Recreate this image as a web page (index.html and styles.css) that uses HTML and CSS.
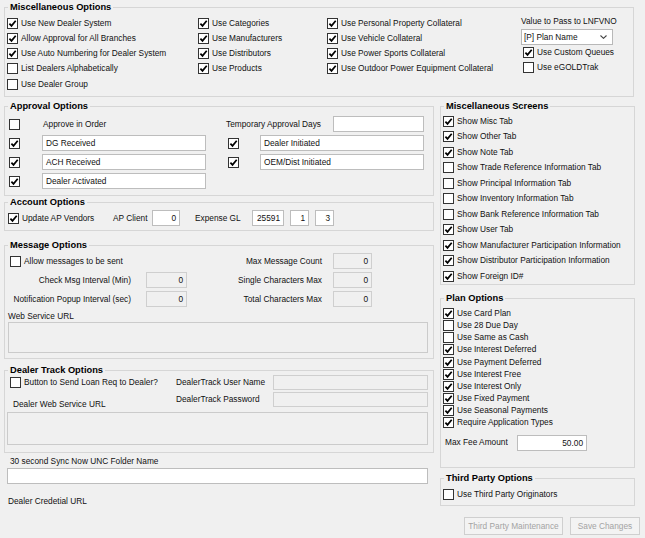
FILE: index.html
```html
<!DOCTYPE html>
<html>
<head>
<meta charset="utf-8">
<title>Dealer Settings</title>
<link rel="stylesheet" href="styles.css">
</head>
<body>
<div class="page">

  <div class="group g-misc">
    <div class="gtitle">Miscellaneous Options</div>
    <div class="misc-grid">
      <div class="mcol">
        <div class="cb"><span class="box"><svg viewBox="0 0 9 9"><path d="M1.4 4.6 3.5 6.9 7.7 1.7"/></svg></span><span>Use New Dealer System</span></div>
        <div class="cb"><span class="box"><svg viewBox="0 0 9 9"><path d="M1.4 4.6 3.5 6.9 7.7 1.7"/></svg></span><span>Allow Approval for All Branches</span></div>
        <div class="cb"><span class="box"><svg viewBox="0 0 9 9"><path d="M1.4 4.6 3.5 6.9 7.7 1.7"/></svg></span><span>Use Auto Numbering for Dealer System</span></div>
        <div class="cb"><span class="box"></span><span>List Dealers Alphabetically</span></div>
        <div class="cb"><span class="box"></span><span>Use Dealer Group</span></div>
      </div>
      <div class="mcol">
        <div class="cb"><span class="box"><svg viewBox="0 0 9 9"><path d="M1.4 4.6 3.5 6.9 7.7 1.7"/></svg></span><span>Use Categories</span></div>
        <div class="cb"><span class="box"><svg viewBox="0 0 9 9"><path d="M1.4 4.6 3.5 6.9 7.7 1.7"/></svg></span><span>Use Manufacturers</span></div>
        <div class="cb"><span class="box"><svg viewBox="0 0 9 9"><path d="M1.4 4.6 3.5 6.9 7.7 1.7"/></svg></span><span>Use Distributors</span></div>
        <div class="cb"><span class="box"><svg viewBox="0 0 9 9"><path d="M1.4 4.6 3.5 6.9 7.7 1.7"/></svg></span><span>Use Products</span></div>
      </div>
      <div class="mcol">
        <div class="cb"><span class="box"><svg viewBox="0 0 9 9"><path d="M1.4 4.6 3.5 6.9 7.7 1.7"/></svg></span><span>Use Personal Property Collateral</span></div>
        <div class="cb"><span class="box"><svg viewBox="0 0 9 9"><path d="M1.4 4.6 3.5 6.9 7.7 1.7"/></svg></span><span>Use Vehicle Collateral</span></div>
        <div class="cb"><span class="box"><svg viewBox="0 0 9 9"><path d="M1.4 4.6 3.5 6.9 7.7 1.7"/></svg></span><span>Use Power Sports Collateral</span></div>
        <div class="cb"><span class="box"><svg viewBox="0 0 9 9"><path d="M1.4 4.6 3.5 6.9 7.7 1.7"/></svg></span><span>Use Outdoor Power Equipment Collateral</span></div>
      </div>
      <div class="mcol mcol4">
        <div class="lbl">Value to Pass to LNFVNO</div>
        <div class="select"><span>[P] Plan Name</span><svg class="chev" viewBox="0 0 7 4"><path d="M0.5 0.5 3.5 3.3 6.5 0.5"/></svg></div>
        <div class="cb cb15"><span class="box"><svg viewBox="0 0 9 9"><path d="M1.4 4.6 3.5 6.9 7.7 1.7"/></svg></span><span>Use Custom Queues</span></div>
        <div class="cb cb15"><span class="box"></span><span>Use eGOLDTrak</span></div>
      </div>
    </div>
  </div>

  <div class="columns">
    <div class="left">

      <div class="group g-appr">
        <div class="gtitle">Approval Options</div>
        <div class="appr-grid">
          <span class="box"></span>
          <div class="lbl pad1">Approve in Order</div>
          <div></div>
          <div class="appr-right"><span class="lbl">Temporary Approval Days</span><div class="tb w91"></div></div>

          <span class="box"><svg viewBox="0 0 9 9"><path d="M1.4 4.6 3.5 6.9 7.7 1.7"/></svg></span>
          <div class="tb">DG Received</div>
          <div></div>
          <div class="appr-right"><span class="box ml2"><svg viewBox="0 0 9 9"><path d="M1.4 4.6 3.5 6.9 7.7 1.7"/></svg></span><div class="tb w164">Dealer Initiated</div></div>

          <span class="box"><svg viewBox="0 0 9 9"><path d="M1.4 4.6 3.5 6.9 7.7 1.7"/></svg></span>
          <div class="tb">ACH Received</div>
          <div></div>
          <div class="appr-right"><span class="box ml2"><svg viewBox="0 0 9 9"><path d="M1.4 4.6 3.5 6.9 7.7 1.7"/></svg></span><div class="tb w164">OEM/Dist Initiated</div></div>

          <span class="box"><svg viewBox="0 0 9 9"><path d="M1.4 4.6 3.5 6.9 7.7 1.7"/></svg></span>
          <div class="tb">Dealer Activated</div>
        </div>
      </div>

      <div class="group g-acct">
        <div class="gtitle">Account Options</div>
        <div class="acct-row">
          <div class="cb w105"><span class="box"><svg viewBox="0 0 9 9"><path d="M1.4 4.6 3.5 6.9 7.7 1.7"/></svg></span><span>Update AP Vendors</span></div>
          <span class="lbl w39">AP Client</span>
          <div class="tb num w28">0</div>
          <span class="lbl w57 ml15">Expense GL</span>
          <div class="tb num w32">25591</div>
          <div class="tb num w19 ml6">1</div>
          <div class="tb num w19 ml6">3</div>
        </div>
      </div>

      <div class="group g-msg">
        <div class="gtitle">Message Options</div>
        <div class="gbody">
          <div class="msg-grid">
            <div class="cb c13 ml2"><span class="box"></span><span>Allow messages to be sent</span></div>
            <span class="lbl rl c4">Max Message Count</span>
            <div class="tb ro num c6">0</div>

            <span class="lbl rl c1">Check Msg Interval (Min)</span>
            <div class="tb ro num c3">0</div>
            <span class="lbl rl c4">Single Characters Max</span>
            <div class="tb ro num c6">0</div>

            <span class="lbl rl c1">Notification Popup Interval (sec)</span>
            <div class="tb ro num c3">0</div>
            <span class="lbl rl c4">Total Characters Max</span>
            <div class="tb ro num c6">0</div>
          </div>
          <div class="lbl wlabel">Web Service URL</div>
          <div class="area msg-area"></div>
        </div>
      </div>

      <div class="group g-dealer">
        <div class="gtitle">Dealer Track Options</div>
        <div class="gbody">
          <div class="dt-grid">
            <div class="cb ml2"><span class="box"></span><span>Button to Send Loan Req to Dealer?</span></div>
            <span class="lbl">DealerTrack User Name</span>
            <div class="tb ro"></div>
            <span class="lbl dws">Dealer Web Service URL</span>
            <span class="lbl">DealerTrack Password</span>
            <div class="tb ro"></div>
          </div>
          <div class="area dt-area"></div>
        </div>
      </div>

      <div class="loose">
        <div class="lbl sync-label">30 second Sync Now UNC Folder Name</div>
        <div class="tb sync-box"></div>
        <div class="lbl cred-label">Dealer Credetial URL</div>
      </div>
    </div>

    <div class="right">
      <div class="group g-screens">
        <div class="gtitle">Miscellaneous Screens</div>
        <div class="rlist">
          <div class="cb r155"><span class="box"><svg viewBox="0 0 9 9"><path d="M1.4 4.6 3.5 6.9 7.7 1.7"/></svg></span><span>Show Misc Tab</span></div>
          <div class="cb r155"><span class="box"><svg viewBox="0 0 9 9"><path d="M1.4 4.6 3.5 6.9 7.7 1.7"/></svg></span><span>Show Other Tab</span></div>
          <div class="cb r155"><span class="box"><svg viewBox="0 0 9 9"><path d="M1.4 4.6 3.5 6.9 7.7 1.7"/></svg></span><span>Show Note Tab</span></div>
          <div class="cb r155"><span class="box"></span><span>Show Trade Reference Information Tab</span></div>
          <div class="cb r155"><span class="box"></span><span>Show Principal Information Tab</span></div>
          <div class="cb r155"><span class="box"></span><span>Show Inventory Information Tab</span></div>
          <div class="cb r155"><span class="box"></span><span>Show Bank Reference Information Tab</span></div>
          <div class="cb r155"><span class="box"><svg viewBox="0 0 9 9"><path d="M1.4 4.6 3.5 6.9 7.7 1.7"/></svg></span><span>Show User Tab</span></div>
          <div class="cb r155"><span class="box"><svg viewBox="0 0 9 9"><path d="M1.4 4.6 3.5 6.9 7.7 1.7"/></svg></span><span>Show Manufacturer Participation Information</span></div>
          <div class="cb r155"><span class="box"><svg viewBox="0 0 9 9"><path d="M1.4 4.6 3.5 6.9 7.7 1.7"/></svg></span><span>Show Distributor Participation Information</span></div>
          <div class="cb r155"><span class="box"><svg viewBox="0 0 9 9"><path d="M1.4 4.6 3.5 6.9 7.7 1.7"/></svg></span><span>Show Foreign ID#</span></div>
        </div>
      </div>

      <div class="group g-plan">
        <div class="gtitle">Plan Options</div>
        <div class="plist">
          <div class="cb r122"><span class="box"><svg viewBox="0 0 9 9"><path d="M1.4 4.6 3.5 6.9 7.7 1.7"/></svg></span><span>Use Card Plan</span></div>
          <div class="cb r122"><span class="box"></span><span>Use 28 Due Day</span></div>
          <div class="cb r122"><span class="box"></span><span>Use Same as Cash</span></div>
          <div class="cb r122"><span class="box"><svg viewBox="0 0 9 9"><path d="M1.4 4.6 3.5 6.9 7.7 1.7"/></svg></span><span>Use Interest Deferred</span></div>
          <div class="cb r122"><span class="box"><svg viewBox="0 0 9 9"><path d="M1.4 4.6 3.5 6.9 7.7 1.7"/></svg></span><span>Use Payment Deferred</span></div>
          <div class="cb r122"><span class="box"><svg viewBox="0 0 9 9"><path d="M1.4 4.6 3.5 6.9 7.7 1.7"/></svg></span><span>Use Interest Free</span></div>
          <div class="cb r122"><span class="box"><svg viewBox="0 0 9 9"><path d="M1.4 4.6 3.5 6.9 7.7 1.7"/></svg></span><span>Use Interest Only</span></div>
          <div class="cb r122"><span class="box"><svg viewBox="0 0 9 9"><path d="M1.4 4.6 3.5 6.9 7.7 1.7"/></svg></span><span>Use Fixed Payment</span></div>
          <div class="cb r122"><span class="box"><svg viewBox="0 0 9 9"><path d="M1.4 4.6 3.5 6.9 7.7 1.7"/></svg></span><span>Use Seasonal Payments</span></div>
          <div class="cb r122"><span class="box"><svg viewBox="0 0 9 9"><path d="M1.4 4.6 3.5 6.9 7.7 1.7"/></svg></span><span>Require Application Types</span></div>
          <div class="fee-row"><span class="lbl fee-label">Max Fee Amount</span><div class="tb num w70">50.00</div></div>
        </div>
      </div>

      <div class="group g-third">
        <div class="gtitle">Third Party Options</div>
        <div class="tlist">
          <div class="cb cb15"><span class="box"></span><span class="ml2">Use Third Party Originators</span></div>
        </div>
      </div>

      <div class="buttons">
        <div class="btn w99">Third Party Maintenance</div>
        <div class="btn w70b">Save Changes</div>
      </div>
    </div>
  </div>
</div>
</body>
</html>
```

FILE: styles.css
```css
* { box-sizing: border-box; }
html, body { margin: 0; padding: 0; }
body {
  background: #f0f0f0;
  font-family: "Liberation Sans", Arial, sans-serif;
  font-size: 8.3px;
  line-height: 11px;
  color: #111;
  width: 645px;
  height: 538px;
  overflow: hidden;
}
.page { padding: 7px 0 0 4px; }

/* group boxes */
.group { border: 1px solid #d6d6d6; }
.gtitle {
  width: fit-content;
  height: 11px;
  line-height: 11px;
  margin: -6px 0 0 3px;
  padding: 0 2px;
  background: #f0f0f0;
  font-weight: bold;
  font-size: 9.3px;
  color: #000;
  white-space: nowrap;
}
.gbody { padding-left: 3px; }

/* checkbox */
.cb { display: flex; align-items: center; height: 15.25px; white-space: nowrap; }
.cb15 { height: 15px; }
.r155 { height: 15.5px; }
.r122 { height: 12.2px; }
.box {
  width: 11px; height: 11px;
  border: 1px solid #333;
  background: #fff;
  margin-right: 3px;
  flex: none;
  display: flex;
  align-items: center;
  justify-content: center;
}
.box svg { width: 9px; height: 9px; fill: none; stroke: #000; stroke-width: 1.7; }
.lbl { white-space: nowrap; }

/* widths / spacing helpers */
.ml2 { margin-left: 2px; }
.ml6 { margin-left: 6px; }
.ml15 { margin-left: 15px; }
.pad1 { padding-left: 1px; }
.w19 { width: 19px; }
.w28 { width: 28px; }
.w32 { width: 32px; }
.w39 { width: 39px; }
.w57 { width: 57px; }
.w70 { width: 70px; }
.w91 { width: 91px; }
.w105 { width: 105px; }
.w164 { width: 164px; }

/* text boxes */
.tb {
  height: 16px;
  border: 1px solid #bdbdbd;
  background: #fff;
  padding: 0 3px;
  line-height: 14px;
  white-space: nowrap;
  overflow: hidden;
  flex: none;
}
.tb.ro { background: #f0f0f0; border-color: #cfcfcf; }
.tb.num { text-align: right; padding-right: 3px; }
.area { background: #f0f0f0; border: 1px solid #cbcbcb; }

/* misc options */
.g-misc { width: 630px; height: 90px; }
.misc-grid {
  display: grid;
  grid-template-columns: 191px 129px 194px 1fr;
  padding: 2.5px 0 0 2px;
}
.mcol4 { display: flex; flex-direction: column; }
.mcol4 .cb { margin-left: 2px; }
.select {
  width: 92px; height: 16px;
  margin-top: 2.5px;
  border: 1px solid #b8b8b8;
  background: #fff;
  display: flex;
  align-items: center;
  justify-content: space-between;
  padding: 0 5px 0 2px;
}
.chev { width: 7px; height: 4px; fill: none; stroke: #444; stroke-width: 1.1; }

/* columns */
.columns { display: flex; gap: 6px; margin-top: 9px; align-items: flex-start; }
.left { width: 430px; }
.right { width: 195px; }

/* approval */
.g-appr { height: 90px; }
.appr-grid {
  display: grid;
  grid-template-columns: 33px 164px 20px 198px;
  grid-auto-rows: 16px;
  row-gap: 3px;
  align-items: center;
  padding: 4px 0 0 4px;
}
.appr-right { display: flex; align-items: center; justify-content: space-between; }

/* account */
.g-acct { height: 29px; margin-top: 6px; }
.acct-row { display: flex; align-items: center; height: 16px; margin: 2px 0 0 3px; }

/* message */
.g-msg { height: 114px; margin-top: 14px; }
.msg-grid {
  display: grid;
  grid-template-columns: 123px 15px 41px 135px 11px 39px;
  grid-template-rows: 16px 16px 16px;
  row-gap: 3px;
  align-items: center;
  padding-top: 2px;
}
.c1 { grid-column: 1; }
.c3 { grid-column: 3; }
.c4 { grid-column: 4; }
.c6 { grid-column: 6; }
.c13 { grid-column: 1 / 4; }
.rl { justify-self: end; }
.wlabel { margin: 3.5px 0 0 0; }
.msg-area { width: 420px; height: 31px; margin-top: 0.5px; }

/* dealer track */
.g-dealer { height: 83px; margin-top: 11px; }
.dt-grid {
  display: grid;
  grid-template-columns: 168px 97px 155px;
  grid-template-rows: 15px 15px;
  row-gap: 2px;
  align-items: center;
  margin-top: -1px;
}
.dt-grid .tb { height: 15px; line-height: 13px; }
.dws { align-self: start; margin: 7px 0 0 5px; }
.dt-area { width: 421px; height: 33px; margin: 5px 0 0 -1px; }

/* loose fields */
.sync-label { margin: 2.5px 0 0 6px; }
.sync-box { width: 421px; margin: 1.5px 0 0 3px; }
.cred-label { margin: 12px 0 0 4px; }

/* right column */
.g-screens { height: 179px; }
.rlist { padding: 1.5px 0 0 2px; }
.g-plan { height: 170px; margin-top: 13px; }
.plist { padding: 3.2px 0 0 2px; }
.fee-row { display: flex; align-items: center; margin-top: 5.8px; height: 16px; }
.fee-label { width: 74px; padding-left: 2px; }
.g-third { height: 28px; margin-top: 10px; }
.tlist { padding: 2.5px 0 0 2px; }
.tlist .box { margin-right: 1px; }

.buttons { display: flex; justify-content: flex-end; gap: 7px; margin: 11px -5px 0 0; }
.btn {
  height: 18px;
  border: 1px solid #cfcfcf;
  background: #f3f3f3;
  color: #a3a3a3;
  text-align: center;
  line-height: 16px;
  white-space: nowrap;
}
.w99 { width: 99px; }
.w70b { width: 70px; }
```
